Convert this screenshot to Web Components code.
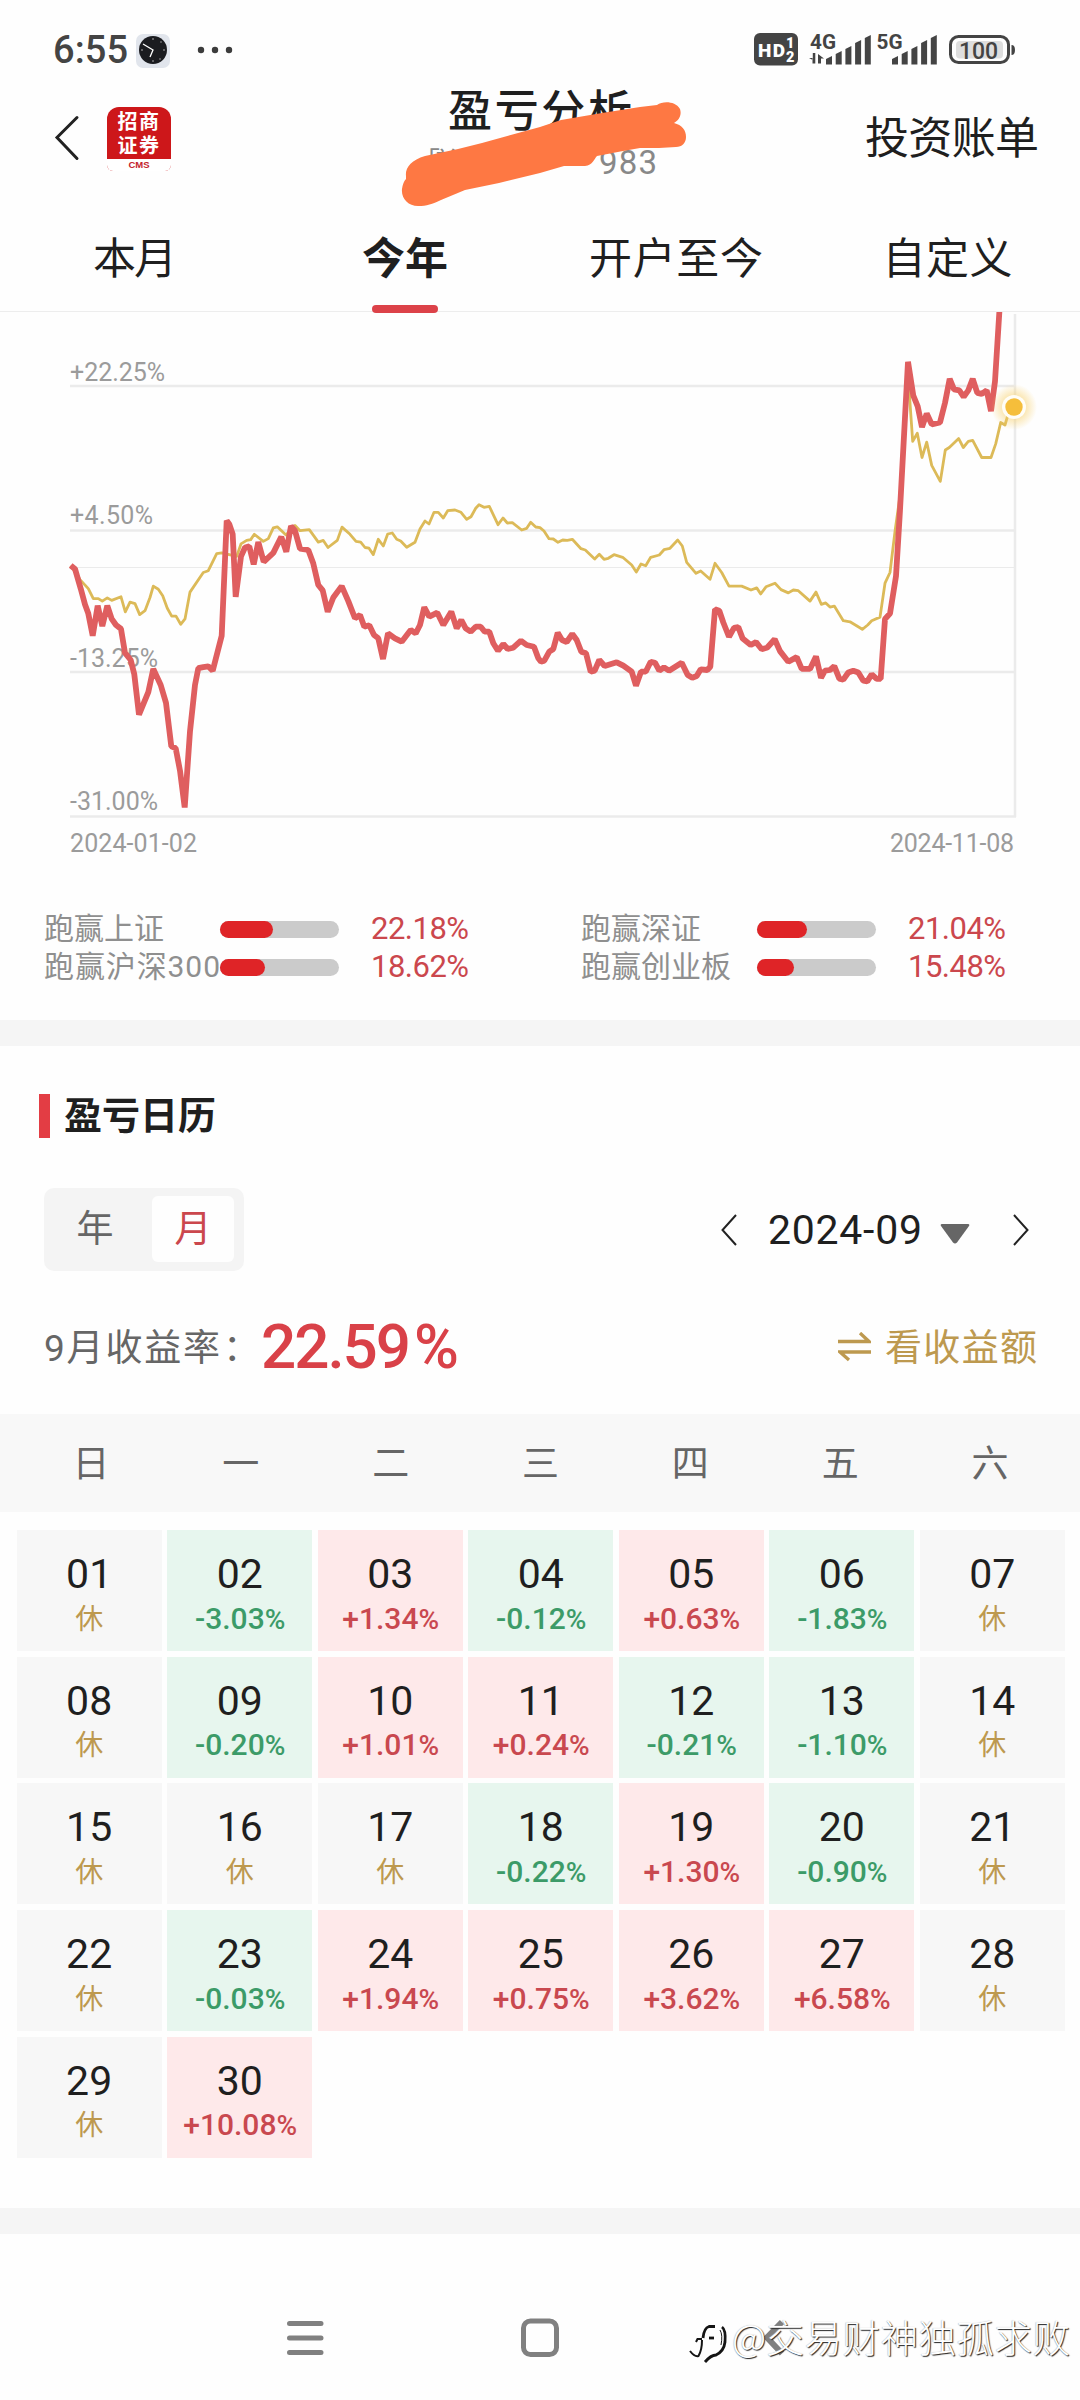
<!DOCTYPE html>
<html lang="zh-CN">
<head>
<meta charset="utf-8">
<title>盈亏分析</title>
<style>
html,body{margin:0;padding:0;background:#fefefe}
body{width:1080px;height:2400px;overflow:hidden;font-family:Roboto,"Noto Sans CJK SC",sans-serif;color:#1f1f1f}
</style>
</head>
<body>
<pnl-app></pnl-app>
<script>
const define = (name, html, init) => customElements.define(name, class extends HTMLElement {
  connectedCallback() {
    if (this.shadowRoot) return;
    const root = this.attachShadow({mode: 'open'});
    root.innerHTML = typeof html === 'function' ? html(this) : html;
    if (init) init(this, root);
  }
});

/* Text whose letter spacing is adjusted so that it spans the width in "w". */
define('fit-text', `<style>:host{display:inline-block;white-space:nowrap}</style><span><slot></slot></span>`, (el, root) => {
  const span = root.querySelector('span');
  const text = root.querySelector('slot').assignedNodes({flatten: true}).map(n => n.textContent).join('').trim();
  const n = [...text].length;
  const ls = (+el.getAttribute('w') - span.getBoundingClientRect().width) / Math.max(1, n - 1);
  if (n < 2) return;
  span.style.letterSpacing = ls + 'px';
  span.style.marginRight = -ls + 'px';
});

const bars = x => [57, 52, 47, 41, 36].map((y, i) =>
  `<path d="M${x + i * 9.7} 64.500V${y + 2}l6-3V64.500z"/>`).join('');

define('status-bar', `<style>
:host{display:flex;height:76px;padding:0 64px 0 53px;align-items:flex-start;color:#444}
.time{font-size:38px;font-weight:500;line-height:38px;margin-top:31px}
.clock{margin:33px 0 0 7px}
.dots{margin:45px 0 0 26px}
.sys{margin:0 0 0 auto}
svg{display:block}
</style>
<fit-text class="time" w="75">6:55</fit-text>
<svg class="clock" width="36" height="36" viewBox="0 0 36 36"><rect x="1" y="1" width="34" height="34" rx="7" fill="#e1e5ec"/><circle cx="18" cy="17" r="14" fill="#1b1c20"/><path d="M8 11l10 6-3 7" fill="none" stroke="#fff" stroke-width="1.300"/><g fill="#bbb"><circle cx="18" cy="6" r=".8"/><circle cx="29" cy="17" r=".8"/><circle cx="18" cy="28" r=".8"/><circle cx="7" cy="17" r=".8"/><circle cx="26" cy="9" r=".7"/><circle cx="25" cy="26" r=".7"/></g></svg>
<svg class="dots" width="36" height="12" viewBox="0 0 36 12" fill="#3c3c3c"><circle cx="4" cy="5" r="3.200"/><circle cx="18" cy="5" r="3.200"/><circle cx="32" cy="5" r="3.200"/></svg>
<svg class="sys" width="264" height="76" viewBox="752 0 264 76" fill="#444" font-family="Roboto">
<rect x="754" y="33" width="44" height="32.500" rx="6"/>
<g fill="#fff" font-weight="900"><text x="758" y="57" font-size="19" textLength="27">HD</text><text x="786" y="48" font-size="14.500">1</text><text x="786" y="62" font-size="14.500">2</text></g>
<g font-weight="700" font-size="20"><text x="810" y="48.500" textLength="26" lengthAdjust="spacingAndGlyphs">4G</text><text x="876.500" y="48.500" textLength="26" lengthAdjust="spacingAndGlyphs">5G</text></g>
<path d="M809 58h3.500v5.500l2.800 0V53h-2.500v7zM818 63.500V54l6 4.500h-3v5z"/>
${bars(826)}${bars(892)}
<rect x="950.500" y="36.500" width="58" height="26" rx="8" fill="none" stroke="#444" stroke-width="3"/>
<rect x="956" y="41" width="47" height="17.500" rx="4" fill="#dedede"/>
<path d="M1011.500 45q3.500 0 3.500 5t-3.500 5z"/>
<text x="959" y="58.500" font-size="23" font-weight="500" textLength="39">100</text>
</svg>`);

define('page-header', `<style>
:host{display:flex;height:133px;position:relative;align-items:flex-start}
svg{display:block}
.back{margin:39px 0 0 54px}
.logo{margin:31px 0 0 27px;width:64px;height:64px;border-radius:12px 12px 6px 6px;background:#cd171a;color:#fff;overflow:hidden;text-align:center;font-family:"Liberation Sans","Noto Sans CJK SC",sans-serif;font-weight:700;font-size:20px;line-height:24px;letter-spacing:1.500px;display:flex;flex-direction:column}
.logo div{height:24px}
.logo .top{padding-top:3px}
.logo .cms{margin-top:auto;height:12px;background:#fff;color:#c4222c;font:700 9.500px/12px "Liberation Sans",sans-serif;letter-spacing:0}
.mid{width:280px;margin:9px 0 0 229px;display:flex;flex-direction:column}
.title{font-size:44px;line-height:50px;font-weight:500;margin:1.500px 0 0 48px}
.acct{display:flex;font-size:33px;line-height:36px;color:#888;margin-top:8px}
.acct .n{margin-left:auto;margin-right:23px}
.acct .l{font-size:27px;letter-spacing:-6px;margin-left:13px}
.bill{margin:38px 41px 0 auto;font-size:44px;line-height:50px}
.mark{position:absolute;left:400px;top:24px}
</style>
<svg class="back" width="26" height="46" viewBox="0 0 26 46"><path d="M23 2.500L3 22.500l20 21" fill="none" stroke="#222" stroke-width="3" stroke-linecap="round"/></svg>
<div class="logo"><div class="top">招商</div><div>证券</div><div class="cms">CMS</div></div>
<div class="mid"><div class="title"><fit-text w="184">盈亏分析</fit-text></div><div class="acct"><span class="l">「普</span><fit-text class="n" w="58">983</fit-text></div></div>
<div class="bill"><fit-text w="174">投资账单</fit-text></div>
<svg class="mark" width="290" height="110" viewBox="400 100 290 110"><path fill="#fe7843" d="M406 176C405 168 411 160 425 156L458 149 482 143 540 127 561 120 602 113 640 107 657 105C663 101 675 101 680 109C682 115 679 120 674 123C682 125 686 130 686 137C686 143 682 147 676 147L659 148 640 148 623 151 597 156C594 159 593 165 585 166L564 166 540 173 499 183 465 190 441 200C432 204 427 206 418 206C408 206 401 198 402 189Q403 182 406 179Z"/></svg>`);

define('range-tabs', `<style>
:host{display:grid;grid-template-columns:repeat(4,1fr);height:103px;border-bottom:1.500px solid #ededed;box-sizing:border-box}
div{display:flex;flex-direction:column;align-items:center;font-size:43px;line-height:56px;padding-top:22px}
.on{font-weight:700}
.on::after{content:"";width:66px;height:8px;border-radius:4px;background:#dc4249;margin-top:18px}
</style>
<div><fit-text w="84">本月</fit-text></div><div class="on"><fit-text w="86">今年</fit-text></div><div style="padding-left:2px"><fit-text w="174">开户至今</fit-text></div><div style="padding-left:5px"><fit-text w="130">自定义</fit-text></div>`);

/* Each run: x origin, y origin, x scale, y scale, then the x,y pairs. */
const RED = [
 [40,310,3,2.8,'92,715 105,725 122,780 135,825 145,850 158,912 173,828 187,885 202,828 215,865 228,882 243,893 255,960 272,980 283,1020 297,1133 325,1070 340,1005 362,1050 378,1100 394,1222 407,1227 420,1290 434,1393 450,1180 465,1050 475,1003 490,1000 505,998 518,1010 545,912 560,590 568,600 578,628 587,803 603,690 615,665 628,662 641,712 655,650 671,705 700,680 724,635 739,677 753,605 765,618 780,668 805,672 820,710 835,770 848,785 863,845 880,805 905,773 925,815 945,863'],
 [360,460,3,3,'0,465 13,500 28,496 42,525 55,535 69,597 84,520 105,535 125,545 152,510 167,520 180,495 193,442 208,470 232,458 250,495 274,455 290,505 304,480 317,505 332,515 347,500 362,500 374,515 388,515 400,550 414,572 430,552 443,567 460,563 483,542 500,555 522,560 535,595 543,605 553,602 568,575 580,567 593,518 606,540 620,546 637,522 650,540 664,575 678,580 692,635 704,632 718,600 734,618 770,607 790,617 815,635 828,677 843,635 857,635 872,605 885,608 898,632 912,622 927,632 965,608 983,645 997,653 1010,648 1022,628 1042,630 1051,620 1065,448'],
 [680,310,3,2.8,'118,842 130,875 147,915 162,890 175,888 188,920 212,938 228,930 245,950 262,945 284,922 300,955 325,985 350,972 365,1005 390,1005 408,970 423,1030 435,1010 450,1008 463,997 478,1032 490,1035 505,1015 520,1010 535,1015 550,1038 562,1040 575,1020 590,1033 602,1033 615,865 630,850 648,745 660,560 684,145 700,240 713,270 726,328 740,290 755,320 780,315 795,260 809,193 822,222 838,225 851,243 865,225 878,193 892,232 905,235 920,225 933,283 945,200 958,8 961,-40']];
const GOLD = [
 [40,310,3,2.8,'92,715 120,755 145,780 160,808 175,808 187,815 202,806 215,813 243,803 256,845 270,818 285,822 299,853 315,842 330,805 340,773 355,782 368,800 382,835 395,857 408,857 422,880 435,865 450,790 490,735 505,730 530,682 545,680 590,690 603,655 620,645 632,643 643,628 670,648 685,640 700,610 712,607 738,630 765,603 780,618 808,615 835,650 850,645 864,665 892,645 906,608 930,628 948,648 962,650 975,665 987,667 1000,685'],
 [360,460,3,3,'55,238 70,258 83,222 97,219 110,238 122,243 140,262 165,247 180,207 195,183 207,192 222,157 235,157 250,174 263,152 285,150 303,157 320,178 333,170 347,145 357,134 372,142 388,139 414,194 429,174 442,189 457,188 485,210 500,205 512,187 527,201 540,203 552,213 567,236 580,237 594,247 608,240 622,241 637,238 663,266 676,270 704,297 718,283 732,298 745,295 762,284 788,292 815,315 829,336 843,312 857,317 872,292 898,285 912,269 930,265 953,240 967,258 980,307 1008,340 1022,333 1050,358 1065,310'],
 [680,310,3,2.8,'125,735 147,773 185,773 213,784 230,778 242,795 258,775 285,765 303,783 325,792 340,784 355,786 390,815 408,790 424,824 437,820 450,832 463,829 490,870 510,873 547,894 563,882 575,870 600,860 615,765 630,735 645,620 660,520 684,180 698,368 712,345 726,413 740,370 755,435 781,480 796,392 808,385 836,360 850,385 865,368 878,365 905,413 933,413 947,375 962,315 975,322 985,290 1002,272']];
const line = runs => runs.map(([ox, oy, sx, sy, p]) => p.split(' ').map(q => {
  const [x, y] = q.split(',').map(Number);
  return (ox + x / sx).toFixed(1) + ',' + (oy + y / sy).toFixed(1);
}).join(' ')).join(' ');

define('trend-chart', `<style>
:host{display:block;height:591px}
svg{display:block}
text{font-family:Roboto,sans-serif;font-size:25px;fill:#9b9b9b}
</style>
<svg width="1080" height="591" viewBox="0 312 1080 591">
<defs><radialGradient id="g"><stop offset=".45" stop-color="#f7cf68" stop-opacity=".55"/><stop offset="1" stop-color="#f7cf68" stop-opacity="0"/></radialGradient></defs>
<g stroke="#ebebeb" stroke-width="2.500"><path d="M70 386H1015M70 530.500H1015M70 672H1015M70 816.500H1016M1015 314V817"/><path d="M70 567.500H1015" stroke-width="1"/></g>
<text x="70" y="381" textLength="95">+22.25%</text><text x="70" y="524" textLength="83">+4.50%</text><text x="70" y="667" textLength="88">-13.25%</text><text x="70" y="810" textLength="88">-31.00%</text>
<text x="70" y="852" textLength="127">2024-01-02</text><text x="890" y="852" textLength="124">2024-11-08</text>
<polyline points="${line(GOLD)}" fill="none" stroke="#dcba58" stroke-width="2.800" stroke-linejoin="round"/>
<polyline points="${line(RED)}" fill="none" stroke="#df5e5f" stroke-width="5.800" stroke-linejoin="bevel"/>
<circle cx="1014" cy="407" r="23" fill="url(#g)"/><circle cx="1014" cy="407" r="12" fill="#fffdf6"/><circle cx="1014" cy="407" r="8.700" fill="#f5be3b"/>
</svg>`);

define('beat-row', el => {
  const a = n => el.getAttribute(n);
  return `<style>
:host{display:flex;height:38px;align-items:center;color:#8f8f8f;font-size:30px;line-height:38px}
.l{width:176px;white-space:nowrap;flex:none}
.bar{width:119px;height:17px;border-radius:8.500px;background:#cbcbcb;flex:none}
.bar i{display:block;height:17px;border-radius:8.500px;background:#df2427;width:${a('fill')}px}
.v{margin-left:auto;color:#cb474d;font-size:31px}
</style><div class="l"><fit-text w="${a('lw')}"><slot></slot></fit-text></div><div class="bar"><i></i></div><fit-text class="v" w="98">${a('v')}</fit-text>`;
});

define('beat-stats', `<style>
:host{display:grid;grid-template-columns:425px 425px;column-gap:112px;height:117px;align-content:start;padding:4px 0 0 44px;box-sizing:border-box;margin-top:3px}
</style>
<beat-row lw="120" fill="53" v="22.18%">跑赢上证</beat-row><beat-row lw="120" fill="50" v="21.04%">跑赢深证</beat-row>
<beat-row lw="176" fill="45" v="18.62%">跑赢沪深300</beat-row><beat-row lw="150" fill="37" v="15.48%">跑赢创业板</beat-row>`);

define('band-gap', `<style>:host{display:block;height:26px;background:#f5f5f5}</style>`);

define('calendar-head', `<style>
:host{display:flex;flex-direction:column;height:368px}
svg{display:block}
.h{display:flex;align-items:center;height:44px;margin:48px 0 0 39px;font-size:38px;line-height:44px;font-weight:700}
.h i{width:11px;height:44px;background:#e33d44;margin-right:14px}
.r{display:flex;align-items:center;height:83px;margin:50px 51px 0 44px}
.t{display:flex;width:200px;height:83px;border-radius:10px;background:#f4f4f4;box-sizing:border-box;padding:8px 10px;font-size:37px;line-height:68px;color:#666}
.t div{width:98px;text-align:center;box-sizing:border-box;padding-right:19px;padding-left:3px}
.t .on{width:82px;padding:0;background:#fefefe;border-radius:6px;color:#cb474d;line-height:68px;height:66px}
.m{font-size:41px;line-height:50px;margin:0 18px 0 31px}
.s{display:flex;align-items:center;height:60px;margin:46px 43px 0 44px;font-size:37px;line-height:60px;color:#666}
.s>fit-text,.g fit-text{padding-top:4px}
.c{width:40px;padding:4px 0 0 3px;box-sizing:border-box}
.p{color:#d94148;font-weight:500;font-size:62px;margin-left:1px;display:flex;align-items:baseline}
.p span{font-size:61px;margin-left:3px}
.g{color:#bd994f;display:flex;align-items:center;gap:14px;margin-left:auto}
</style>
<div class="h"><i></i><fit-text w="152">盈亏日历</fit-text></div>
<div class="r"><div class="t"><div>年</div><div class="on">月</div></div>
<svg style="margin-left:auto" width="16" height="32" viewBox="0 0 16 32"><path d="M15 1L1.500 16 15 31" fill="none" stroke="#222" stroke-width="2"/></svg>
<fit-text class="m" w="154">2024-09</fit-text>
<svg style="margin-top:9px" width="30" height="20" viewBox="0 0 30 20"><path d="M2 0H28q2 0 1 2L17 18.500q-2 2-4 0L1 2Q0 0 2 0z" fill="#666"/></svg>
<svg style="margin-left:43px" width="16" height="32" viewBox="0 0 16 32"><path d="M1 1L14.500 16 1 31" fill="none" stroke="#222" stroke-width="2"/></svg></div>
<div class="s"><fit-text w="176">9月收益率</fit-text><span class="c">：</span><div class="p"><fit-text w="150">22.59</fit-text><span>%</span></div>
<div class="g"><svg width="33" height="30" viewBox="0 0 33 30"><path d="M0 9.500H31L22 1M33 20H2l9 8" fill="none" stroke="#bd994f" stroke-width="3.300"/></svg><fit-text w="152">看收益额</fit-text></div></div>`);

define('week-row', `<style>
:host{display:grid;grid-template-columns:repeat(7,1fr);height:98px;background:#f8f8f8;padding:0 15px 0 16px;font-size:37px;line-height:101px;color:#666;text-align:center}
</style>` + [...'日一二三四五六'].map(d => `<span>${d}</span>`).join(''));

define('day-cell', el => {
  const v = el.getAttribute('v'), c = v === '休' ? 'rest' : v[0] === '+' ? 'up' : 'down';
  return `<style>
:host{display:flex;flex-direction:column;align-items:center;height:120.800px;box-sizing:border-box;padding-top:22px}
.d{font-size:41px;line-height:44px}
.v{font-size:30px;font-weight:500;line-height:36px;margin-top:4.500px;padding-left:1px}
.v small{font-size:28px}
.rest{font-size:28px;font-weight:400;color:#bd994f;padding:1px 0 0}
.up{color:#c9484f}.down{color:#3c9b68}
</style><div class="d"><slot></slot></div><div class="v ${c}">${v.replace('%', '<small>%</small>')}</div>`;
}, el => {
  const v = el.getAttribute('v');
  el.style.background = v === '休' ? '#f7f7f7' : v[0] === '+' ? '#fee9ea' : '#e7f6ee';
});

const DAYS = '休 -3.03% +1.34% -0.12% +0.63% -1.83% 休 休 -0.20% +1.01% +0.24% -0.21% -1.10% 休 休 休 休 -0.22% +1.30% -0.90% 休 休 -0.03% +1.94% +0.75% +3.62% +6.58% 休 休 +10.08%'.split(' ');
define('month-grid', `<style>
:host{display:grid;grid-template-columns:repeat(7,1fr);column-gap:5.200px;row-gap:5.950px;height:696px;box-sizing:border-box;padding:18px 15px 0 16.500px;align-content:start}
</style>` + DAYS.map((v, i) => `<day-cell v="${v}">${String(i + 1).padStart(2, '0')}</day-cell>`).join(''));

define('system-nav', `<style>
:host{display:block;height:166px;position:relative}
svg{display:block}
.wm{position:absolute;left:688px;top:77px;display:flex;align-items:center;color:#fff;font-size:37.500px;line-height:48px;font-family:"Noto Sans CJK SC",sans-serif;font-weight:300;text-shadow:1px 1px 1px #222,-.5px -.5px 1px #bbb}
.wm svg{margin-right:4px}
.wm fit-text{margin-top:-5px}
</style>
<svg width="1080" height="166" viewBox="0 2234 1080 166" fill="none" stroke="#808080" stroke-width="5" stroke-linecap="round">
<path d="M289.500 2323.500h31.500M289.500 2338h31.500M289.500 2352.500h31.500"/><rect x="523.500" y="2321" width="33" height="33.500" rx="7"/><path d="M782 2322L767 2337.500l15 16" stroke-width="6" stroke-linecap="butt"/></svg>
<div class="wm"><svg width="40" height="54" viewBox="688 2312 40 54" fill="none" stroke="#151515" stroke-width="2"><path d="M703 2339q1-10 6-11.500h6" stroke-width="2.800"/><path d="M696 2343l1.500-3h4.500M702 2341q0 10-3.500 16-4 1-8.500-5"/><path d="M709 2339h5" stroke-width="2.800"/><path d="M722 2328q4 3 3 15-1 9-9 13-5 0-11 7" stroke-width="2.800"/><path d="M720 2331q3 5 1 15" stroke-width="1"/></svg><fit-text w="338">@交易财神独孤求败</fit-text></div>`);

define('pnl-app', `<style>:host{display:flex;flex-direction:column;width:1080px;height:2400px;overflow:hidden}:host>*{flex:none}</style>
<status-bar></status-bar><page-header></page-header><range-tabs></range-tabs><trend-chart></trend-chart><beat-stats></beat-stats>
<band-gap style="margin-top:-3px"></band-gap><calendar-head></calendar-head><week-row></week-row><month-grid></month-grid><band-gap></band-gap><system-nav></system-nav>`);
</script>
</body>
</html>
